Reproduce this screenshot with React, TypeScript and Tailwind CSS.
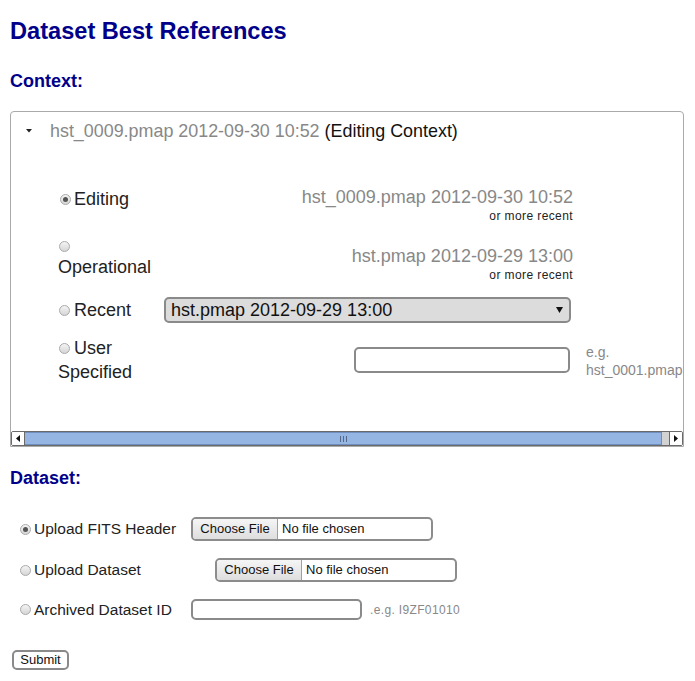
import React from "react";

function Radio({ checked = false }: { checked?: boolean }) {
  return (
    <span className="inline-flex h-[11px] w-[11px] shrink-0 items-center justify-center rounded-full border border-[#a9a9a9] bg-gradient-to-b from-[#f4f4f4] to-[#d6d6d6]">
      {checked ? <span className="h-[5px] w-[5px] rounded-full bg-[#555]" /> : null}
    </span>
  );
}

function FileInput({ className = "" }: { className?: string }) {
  return (
    <div
      className={
        "flex h-[24px] w-[242px] overflow-hidden rounded-[5px] border-2 border-[#8c8c8c] bg-white text-[13px] text-[#111] " +
        className
      }
    >
      <div className="flex h-full w-[85px] items-center justify-center border-r border-[#a0a0a0] bg-gradient-to-b from-[#f5f5f5] to-[#dedede]">
        Choose File
      </div>
      <div className="flex h-full items-center pl-[4px]">No file chosen</div>
    </div>
  );
}

export default function App() {
  return (
    <div className="min-h-[681px] w-[695px] bg-white font-['Liberation_Sans',Arial,sans-serif] text-[#222]">
      <div className="pl-[10px] pt-[17px]">
        <h1 className="h-[28px] text-[23.6px] font-bold leading-[28px] text-[#00008b]">
          Dataset Best References
        </h1>
        <h2 className="mt-[25px] h-[22px] text-[18px] font-bold leading-[22px] text-[#00008b]">
          Context:
        </h2>
      </div>

      {/* Context panel */}
      <div className="ml-[10px] mt-[19px] h-[336px] w-[674px] overflow-hidden rounded-t-[4px] border border-[#aaaaaa]">
        <div className="h-[319px] overflow-hidden">
          {/* Header */}
          <div className="flex h-[38px] items-center">
            <svg className="ml-[15px] mr-[18px]" width="6" height="4" viewBox="0 0 6 4">
              <path d="M0 0 L6 0 L3 3.5 Z" fill="#222" />
            </svg>
            <span className="whitespace-nowrap text-[17.9px] leading-[22px]">
              <span className="text-[#888]">hst_0009.pmap 2012-09-30 10:52</span>{" "}
              <span className="text-[#111]">(Editing Context)</span>
            </span>
          </div>

          <div className="pl-[47px] pt-[36px]">
            {/* Editing */}
            <div className="flex h-[42px]">
              <div className="flex h-[22px] w-[106px] items-center pt-[4px] text-[18px] leading-[22px]">
                <span className="ml-[2px] mr-[3px] flex">
                  <Radio checked />
                </span>
                Editing
              </div>
              <div className="flex w-[409px] flex-col items-end">
                <div className="h-[22px] whitespace-nowrap text-[18px] leading-[22px] text-[#888]">
                  hst_0009.pmap 2012-09-30 10:52
                </div>
                <div className="h-[16px] whitespace-nowrap text-[12px] leading-[16px] tracking-[0.4px] text-[#222]">
                  or more recent
                </div>
              </div>
            </div>

            {/* Operational */}
            <div className="mt-[7px] flex h-[43px]">
              <div className="flex w-[106px] flex-col pt-[1px]">
                <div className="flex h-[20px] items-center pl-[1px]">
                  <Radio />
                </div>
                <div className="h-[22px] text-[18px] leading-[22px]">Operational</div>
              </div>
              <div className="flex w-[409px] flex-col items-end pt-[10px]">
                <div className="h-[22px] whitespace-nowrap text-[18px] leading-[22px] text-[#888]">
                  hst.pmap 2012-09-29 13:00
                </div>
                <div className="h-[16px] whitespace-nowrap text-[12px] leading-[16px] tracking-[0.4px] text-[#222]">
                  or more recent
                </div>
              </div>
            </div>

            {/* Recent */}
            <div className="mt-[19px] flex h-[26px] items-center">
              <div className="flex w-[106px] items-center text-[18px] leading-[22px]">
                <span className="ml-[1px] mr-[4px] flex">
                  <Radio />
                </span>
                Recent
              </div>
              <div className="flex h-[26px] w-[407px] items-center justify-between rounded-[5px] border-2 border-[#8a8a8a] bg-[#dcdcdc] pl-[5px] pr-[6px] text-[18px] text-[#111]">
                <span className="whitespace-nowrap">hst.pmap 2012-09-29 13:00</span>
                <svg width="7" height="6" viewBox="0 0 7 6">
                  <path d="M0 0 L7 0 L3.5 6 Z" fill="#111" />
                </svg>
              </div>
            </div>

            {/* User Specified */}
            <div className="mt-[13px] flex h-[48px]">
              <div className="flex w-[106px] flex-col text-[18px] leading-[24px]">
                <div className="flex items-center">
                  <span className="ml-[1px] mr-[4px] flex">
                    <Radio />
                  </span>
                  User
                </div>
                <div>Specified</div>
              </div>
              <div className="flex w-[409px] justify-end pr-[3px] pt-[11px]">
                <div className="h-[26px] w-[216px] rounded-[5px] border-2 border-[#8a8a8a] bg-white" />
              </div>
              <div className="ml-[13px] whitespace-nowrap pt-[7px] text-[14px] leading-[18px] text-[#888]">
                <div>e.g.</div>
                <div>hst_0001.pmap</div>
              </div>
            </div>
          </div>
        </div>

        {/* Scrollbar */}
        <div className="flex h-[15px] overflow-hidden rounded-[2px] border border-[#6a6a6a]">
          <div className="flex w-[13px] items-center justify-center border-r border-[#6a6a6a] bg-white">
            <svg width="4" height="7" viewBox="0 0 4 7">
              <path d="M4 0 L4 7 L0 3.5 Z" fill="#111" />
            </svg>
          </div>
          <div className="flex flex-1 items-center justify-center border-b border-t border-[#6f8fc0] bg-[#95b6e3]">
            <div className="flex gap-[2px]">
              <span className="h-[6px] w-[1px] bg-[#55688a]" />
              <span className="h-[6px] w-[1px] bg-[#55688a]" />
              <span className="h-[6px] w-[1px] bg-[#55688a]" />
            </div>
          </div>
          <div className="w-[8px] border-l border-[#8a8a8a] bg-[#d2d2d2]" />
          <div className="flex w-[13px] items-center justify-center border-l border-[#6a6a6a] bg-white">
            <svg width="4" height="7" viewBox="0 0 4 7">
              <path d="M0 0 L0 7 L4 3.5 Z" fill="#111" />
            </svg>
          </div>
        </div>
      </div>

      {/* Dataset */}
      <div className="pl-[10px] pt-[20px]">
        <h2 className="h-[22px] text-[18px] font-bold leading-[22px] text-[#00008b]">Dataset:</h2>
      </div>

      <div className="pl-[20px] pt-[28px] text-[15.5px] text-[#222]">
        <div className="flex h-[24px] items-center">
          <div className="flex w-[171px] items-center">
            <span className="mr-[3px] flex">
              <Radio checked />
            </span>
            Upload FITS Header
          </div>
          <FileInput />
        </div>

        <div className="mt-[17px] flex h-[24px] items-center">
          <div className="flex w-[195px] items-center">
            <span className="mr-[3px] flex">
              <Radio />
            </span>
            Upload Dataset
          </div>
          <FileInput />
        </div>

        <div className="mt-[17px] flex h-[21px] items-center">
          <div className="flex w-[171px] items-center">
            <span className="mr-[3px] flex">
              <Radio />
            </span>
            Archived Dataset ID
          </div>
          <div className="h-[21px] w-[171px] rounded-[5px] border-2 border-[#8a8a8a] bg-white" />
          <span className="ml-[8px] text-[12px] tracking-[0.35px] text-[#888]">.e.g. I9ZF01010</span>
        </div>
      </div>

      <div className="pl-[12px] pt-[30px]">
        <button className="flex h-[20px] w-[57px] items-center justify-center rounded-[5px] border-2 border-[#8a8a8a] bg-white text-[13px] text-[#111]">
          Submit
        </button>
      </div>
    </div>
  );
}
